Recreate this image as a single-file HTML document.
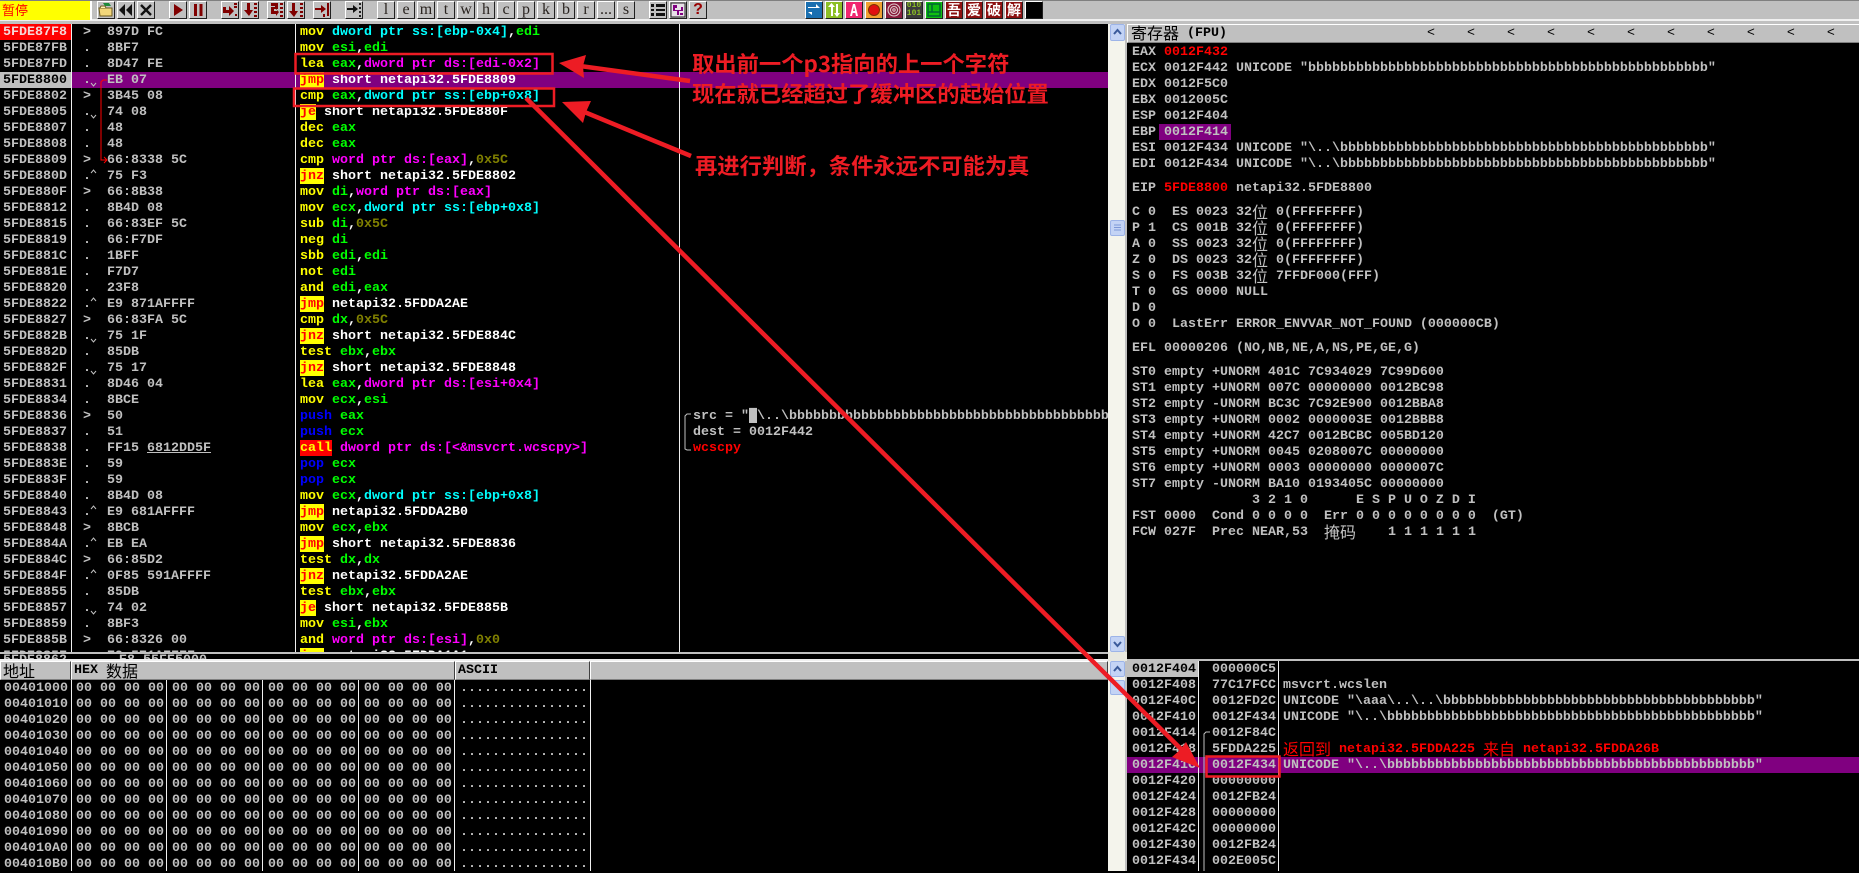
<!DOCTYPE html>
<html><head><meta charset="utf-8"><style>
html,body{margin:0;padding:0;background:#000;width:1859px;height:871px;overflow:hidden}
*{box-sizing:border-box}
pre{margin:1px 0 0 0;position:absolute;font:bold 13.333px/16px "Liberation Mono","Noto Sans CJK SC",monospace;color:#c0c0c0;white-space:pre}
.a{position:absolute}
i{font-style:normal}
.cj{font:normal 16px/16px "Noto Sans CJK SC","WenQuanYi Zen Hei",sans-serif;display:inline-block;height:16px;vertical-align:top;overflow:visible;position:relative;top:-2px}
.hd .cj{top:0}
.y{color:#ff0}.g{color:#0f0}.c{color:#0ff}.m{color:#f0f}.o{color:#808000}.b{color:#00f}.r{color:#f00}
.J{background:#ff0;color:#f00;display:inline-block;height:16px;vertical-align:top;margin-top:-1px;padding-top:1px}
.C{background:#f00;color:#ff0;display:inline-block;height:16px;vertical-align:top;margin-top:-1px;padding-top:1px}
.btn{position:absolute;top:1px;width:18px;height:18px;background:#c0c0c0;border:1px solid;border-color:#fff #202020 #202020 #fff;overflow:hidden;text-align:center;font:16px/16px "Liberation Serif",serif;color:#2a2420}
.btn svg{display:block;position:absolute;left:0;top:0}
.ic{position:absolute;top:1px;width:18px;height:18px;border:1px solid;border-color:#fff #202020 #202020 #fff;overflow:hidden}
.ic svg{display:block}
.hd{position:absolute;background:#c0c0c0;height:19px;border:1px solid;border-color:#fff #404040 #808080 #fff;font:bold 13.333px/17px "Liberation Mono","Noto Sans CJK SC",monospace;color:#000;white-space:pre;padding-left:2px}
.l{position:absolute;background:#f0f0f0;width:1px}
.sb{position:absolute;left:1110px;width:15px;background:#c3d3f5;border:1px solid #9db4e8;border-radius:2px}
.note{position:absolute;font:bold 22.3px/26px "Noto Sans CJK SC","WenQuanYi Zen Hei",sans-serif;color:#ed1c24;white-space:pre}
</style></head><body>

<!-- toolbar -->
<div class="a" style="left:0;top:0;width:1859px;height:24px;background:#c0c0c0;border-top:1px solid #808080"></div>
<div class="a" style="left:0;top:19px;width:1859px;height:2px;background:#f0f0f0"></div>
<div class="a" style="left:0;top:1px;width:90px;height:19px;background:#ff0;color:#f00;font:13px/18px 'Noto Sans CJK SC',sans-serif;padding-left:2px">暂停</div>
<div class="a" style="left:90px;top:1px;width:2px;height:19px;background:#fff"></div>

<div class="btn" style="left:97px"><svg width="16" height="16"><path d="M1 6h13v8H2z" fill="#f2d77a" stroke="#6b5a20"/><path d="M2 6l1-2h4l1 2" fill="#fff3b0" stroke="#6b5a20"/><path d="M5 1h6l2 3H7z" fill="#1c8a3a"/></svg></div>
<div class="btn" style="left:117px"><svg width="16" height="16"><path d="M7 2v12L1 8zM14 2v12L8 8z" fill="#111"/></svg></div>
<div class="btn" style="left:137px"><svg width="16" height="16"><path d="M3 3l10 10M13 3L3 13" stroke="#111" stroke-width="2.4"/></svg></div>
<div class="btn" style="left:169px"><svg width="16" height="16"><path d="M4 2l9 6-9 6z" fill="#800000"/></svg></div>
<div class="btn" style="left:189px"><svg width="16" height="16"><path d="M4 2h3v12H4zM9.500 2h3v12h-3z" fill="#800000"/></svg></div>
<div class="btn" style="left:221px"><svg width="16" height="16"><path d="M1 5h3v3h3V4l5 5-5 5v-3H1z M12 1h3v2h-3zM12 4h3v2h-3zM13 12h2v2h-2z" fill="#800000"/></svg></div>
<div class="btn" style="left:241px"><svg width="16" height="16"><path d="M5 1h3v7h3l-4 6-5-6h3z M12 1h3v2h-3zM12 5h3v2h-3zM12 9h3v2h-3zM12 13h3v2h-3z" fill="#800000"/></svg></div>
<div class="btn" style="left:267px"><svg width="16" height="16"><path d="M3 1h7v6H6v2h3V7l-1 0 3 3-3 4v-2H3V5h4V4H3z M12 1h3v2h-3zM12 5h3v2h-3zM12 9h3v2h-3zM12 13h3v2h-3z" fill="#800000"/></svg></div>
<div class="btn" style="left:287px"><svg width="16" height="16"><path d="M4 1h3v8h3l-4 6-5-6h3z M12 1h3v2h-3zM12 5h3v2h-3zM12 9h3v2h-3zM12 13h3v2h-3z" fill="#800000"/></svg></div>
<div class="btn" style="left:313px"><svg width="16" height="16"><path d="M1 6h6V3l5 4-5 4V8H1zM13 1h2v13h-2zM9 12h2v3H9z" fill="#800000"/></svg></div>
<div class="btn" style="left:345px"><svg width="16" height="16"><path d="M1 6h6V3l5 4-5 4V8H1z" fill="#111"/><path d="M13 1h2v2h-2zM13 5h2v2h-2zM13 9h2v2h-2zM13 13h2v2h-2z" fill="#222"/></svg></div>
<div class="btn" style="left:377px">l</div><div class="btn" style="left:397px">e</div><div class="btn" style="left:417px">m</div><div class="btn" style="left:437px">t</div><div class="btn" style="left:457px">w</div><div class="btn" style="left:477px">h</div><div class="btn" style="left:497px">c</div><div class="btn" style="left:517px">p</div><div class="btn" style="left:537px">k</div><div class="btn" style="left:557px">b</div><div class="btn" style="left:577px">r</div><div class="btn" style="left:597px">...</div><div class="btn" style="left:617px">s</div>
<div class="btn" style="left:649px"><svg width="16" height="16"><path d="M1 2h3v3H1zM6 2h9v3H6zM1 7h3v2H1zM6 7h9v2H6zM1 11h3v3H1zM6 11h9v3H6z" fill="#111"/></svg></div>
<div class="btn" style="left:669px"><svg width="16" height="16"><rect x="1" y="1" width="14" height="14" fill="#e8e0e8" stroke="#222"/><path d="M3 3h4v3H5v2h6V5h2v4H9v4H7V9H3zM10 11h3v2h-3z" fill="#800080"/></svg></div>
<div class="btn" style="left:689px;color:#900;font:bold 16px/16px 'Liberation Sans',sans-serif">?</div>

<div class="ic" style="left:805px;background:#1a6fb0"><svg width="16" height="16"><path d="M2 5h8V2l4 4-4 0H2zM14 10H6v3L2 10l4 0h8z" fill="#fff"/></svg></div>
<div class="ic" style="left:825px;background:#8cbf26"><svg width="16" height="16"><path d="M5 14V5H2l3.500-4L9 5H7v9zM10 2h2v9h2l-3 4-3-4h2z" fill="#fff"/></svg></div>
<div class="ic" style="left:845px;background:#f0266f"><svg width="16" height="16"><path d="M4 14L7 2h2l3 12h-2l-.7-3H6.700L6 14zM7 9h2L8 5z" fill="#fff"/></svg></div>
<div class="ic" style="left:865px;background:#f0a030"><svg width="16" height="16"><circle cx="8" cy="8" r="5.500" fill="#e01010" stroke="#803000"/></svg></div>
<div class="ic" style="left:885px;background:#8a1c3c"><svg width="16" height="16" fill="none" stroke="#e0d0d0"><circle cx="8" cy="8" r="6"/><circle cx="8" cy="8" r="3.500"/><circle cx="8" cy="8" r="1.200"/></svg></div>
<div class="ic" style="left:905px;background:#3c3c3c;color:#8cbf26;font:bold 8px/8px 'Liberation Mono',monospace;text-align:center">010<br>101</div>
<div class="ic" style="left:925px;background:#10c010"><svg width="16" height="16" fill="none" stroke="#063"><rect x="2" y="2" width="12" height="12" stroke-width="1.500"/><path d="M6 2v8M2 10h12" stroke-width="1.500"/></svg></div>
<div class="ic" style="left:945px;background:#8b0f0f;color:#fff;font:bold 14px/16px 'Noto Sans CJK SC',sans-serif;text-align:center">吾</div>
<div class="ic" style="left:965px;background:#8b0f0f;color:#fff;font:bold 14px/16px 'Noto Sans CJK SC',sans-serif;text-align:center">爱</div>
<div class="ic" style="left:985px;background:#8b0f0f;color:#fff;font:bold 14px/16px 'Noto Sans CJK SC',sans-serif;text-align:center">破</div>
<div class="ic" style="left:1005px;background:#8b0f0f;color:#fff;font:bold 14px/16px 'Noto Sans CJK SC',sans-serif;text-align:center">解</div>
<div class="ic" style="left:1025px;background:#000"></div>

<!-- CPU pane -->
<div class="a" style="left:0;top:24px;width:1108px;height:628px;overflow:hidden;background:#000">
<div class="a" style="left:71px;top:48px;width:1037px;height:16px;background:#800080"></div>
<div class="a" style="left:0;top:0;width:71px;height:16px;background:#f00"></div>
<div class="a" style="left:0;top:48px;width:71px;height:16px;background:#c0c0c0"></div>
<pre style="left:3px;top:0"><i style="color:#f4d8d8">5FDE87F8</i>
5FDE87FB
5FDE87FD
<i style="color:#000">5FDE8800</i>
5FDE8802
5FDE8805
5FDE8807
5FDE8808
5FDE8809
5FDE880D
5FDE880F
5FDE8812
5FDE8815
5FDE8819
5FDE881C
5FDE881E
5FDE8820
5FDE8822
5FDE8827
5FDE882B
5FDE882D
5FDE882F
5FDE8831
5FDE8834
5FDE8836
5FDE8837
5FDE8838
5FDE883E
5FDE883F
5FDE8840
5FDE8843
5FDE8848
5FDE884A
5FDE884C
5FDE884F
5FDE8855
5FDE8857
5FDE8859
5FDE885B
5FDE885F</pre>
<pre style="left:83px;top:0">&gt;
.
.
.
&gt;
.
.
.
&gt;
.
&gt;
.
.
.
.
.
.
.
&gt;
.
.
.
.
.
&gt;
.
.
.
.
.
.
&gt;
.
&gt;
.
.
.
.
&gt;
.</pre>
<pre style="left:107px;top:0">897D FC
8BF7
8D47 FE
EB 07
3B45 08
74 08
48
48
66:8338 5C
75 F3
66:8B38
8B4D 08
66:83EF 5C
66:F7DF
1BFF
F7D7
23F8
E9 871AFFFF
66:83FA 5C
75 1F
85DB
75 17
8D46 04
8BCE
50
51
FF15 <i style="text-decoration:underline">6812DD5F</i>
59
59
8B4D 08
E9 681AFFFF
8BCB
EB EA
66:85D2
0F85 591AFFFF
85DB
74 02
8BF3
66:8326 00
E9 571AFFFF</pre>
<pre style="left:300px;top:0;color:#fff"><i class="y">mov</i> <i class="c">dword ptr ss:[ebp-0x4]</i>,<i class="g">edi</i>
<i class="y">mov</i> <i class="g">esi</i>,<i class="g">edi</i>
<i class="y">lea</i> <i class="g">eax</i>,<i class="m">dword ptr ds:[edi-0x2]</i>
<i class="J">jmp</i> short netapi32.5FDE8809
<i class="y">cmp</i> <i class="g">eax</i>,<i class="c">dword ptr ss:[ebp+0x8]</i>
<i class="J">je</i> short netapi32.5FDE880F
<i class="y">dec</i> <i class="g">eax</i>
<i class="y">dec</i> <i class="g">eax</i>
<i class="y">cmp</i> <i class="m">word ptr ds:[eax]</i>,<i class="o">0x5C</i>
<i class="J">jnz</i> short netapi32.5FDE8802
<i class="y">mov</i> <i class="g">di</i>,<i class="m">word ptr ds:[eax]</i>
<i class="y">mov</i> <i class="g">ecx</i>,<i class="c">dword ptr ss:[ebp+0x8]</i>
<i class="y">sub</i> <i class="g">di</i>,<i class="o">0x5C</i>
<i class="y">neg</i> <i class="g">di</i>
<i class="y">sbb</i> <i class="g">edi</i>,<i class="g">edi</i>
<i class="y">not</i> <i class="g">edi</i>
<i class="y">and</i> <i class="g">edi</i>,<i class="g">eax</i>
<i class="J">jmp</i> netapi32.5FDDA2AE
<i class="y">cmp</i> <i class="g">dx</i>,<i class="o">0x5C</i>
<i class="J">jnz</i> short netapi32.5FDE884C
<i class="y">test</i> <i class="g">ebx</i>,<i class="g">ebx</i>
<i class="J">jnz</i> short netapi32.5FDE8848
<i class="y">lea</i> <i class="g">eax</i>,<i class="m">dword ptr ds:[esi+0x4]</i>
<i class="y">mov</i> <i class="g">ecx</i>,<i class="g">esi</i>
<i class="b">push</i> <i class="g">eax</i>
<i class="b">push</i> <i class="g">ecx</i>
<i class="C">call</i> <i class="m">dword ptr ds:[&lt;&amp;msvcrt.wcscpy&gt;]</i>
<i class="b">pop</i> <i class="g">ecx</i>
<i class="b">pop</i> <i class="g">ecx</i>
<i class="y">mov</i> <i class="g">ecx</i>,<i class="c">dword ptr ss:[ebp+0x8]</i>
<i class="J">jmp</i> netapi32.5FDDA2B0
<i class="y">mov</i> <i class="g">ecx</i>,<i class="g">ebx</i>
<i class="J">jmp</i> short netapi32.5FDE8836
<i class="y">test</i> <i class="g">dx</i>,<i class="g">dx</i>
<i class="J">jnz</i> netapi32.5FDDA2AE
<i class="y">test</i> <i class="g">ebx</i>,<i class="g">ebx</i>
<i class="J">je</i> short netapi32.5FDE885B
<i class="y">mov</i> <i class="g">esi</i>,<i class="g">ebx</i>
<i class="y">and</i> <i class="m">word ptr ds:[esi]</i>,<i class="o">0x0</i>
<i class="J">jmp</i> netapi32.5FDDA1A1</pre>
<pre style="left:693px;top:384px">src = "█\..\bbbbbbbbbbbbbbbbbbbbbbbbbbbbbbbbbbbbbbbbbbbbbbbbbbbbbbbbbb
dest = 0012F442
<i class="r">wcscpy</i></pre>
<div class="l" style="left:71px;top:0;height:628px"></div>
<div class="l" style="left:295px;top:0;height:628px"></div>
<div class="l" style="left:679px;top:0;height:628px"></div>
</div>
<div class="a" style="left:0;top:652px;width:1108px;height:2px;background:#c0c0c0"></div>
<div class="a" style="left:0;top:654px;width:1108px;height:5px;overflow:hidden;background:#000">
<pre style="left:3px;top:-2px">5FDE8862</pre>
<pre style="left:119px;top:-2px">E8 55FE5000</pre>
</div>
<div class="a" style="left:0;top:659px;width:1108px;height:2px;background:#f0f0f0"></div>

<!-- scrollbars -->
<div class="a" style="left:1108px;top:24px;width:19px;height:847px;background:#f4f4ec"></div>
<div class="a" style="left:1125px;top:24px;width:2px;height:847px;background:#c0c0c0"></div>
<div class="sb" style="top:24px;height:17px"><svg width="13" height="15"><path d="M3 9l3.500-4L10 9" fill="none" stroke="#3a5a9a" stroke-width="2"/></svg></div>
<div class="sb" style="top:220px;height:16px"><svg width="13" height="14"><path d="M3 4h7M3 6.500h7M3 9h7" stroke="#7d98d8"/></svg></div>
<div class="sb" style="top:636px;height:16px"><svg width="13" height="14"><path d="M3 5l3.500 4L10 5" fill="none" stroke="#3a5a9a" stroke-width="2"/></svg></div>
<div class="a" style="left:1108px;top:652px;width:19px;height:9px;background:#e8e8e0"></div>
<div class="sb" style="top:661px;height:16px"><svg width="13" height="14"><path d="M3 9l3.500-4L10 9" fill="none" stroke="#3a5a9a" stroke-width="2"/></svg></div>
<div class="sb" style="top:680px;height:15px"></div>

<!-- hex dump -->
<div class="hd" style="left:0;top:661px;width:71px"><span class="cj" style="font-size:16px">地址</span></div>
<div class="hd" style="left:71px;top:661px;width:384px">HEX <span class="cj">数据</span></div>
<div class="hd" style="left:455px;top:661px;width:135px">ASCII</div>
<div class="hd" style="left:590px;top:661px;width:518px"></div>
<pre style="left:4px;top:680px">00401000
00401010
00401020
00401030
00401040
00401050
00401060
00401070
00401080
00401090
004010A0
004010B0</pre>
<pre style="left:76px;top:680px">00 00 00 00 00 00 00 00 00 00 00 00 00 00 00 00
00 00 00 00 00 00 00 00 00 00 00 00 00 00 00 00
00 00 00 00 00 00 00 00 00 00 00 00 00 00 00 00
00 00 00 00 00 00 00 00 00 00 00 00 00 00 00 00
00 00 00 00 00 00 00 00 00 00 00 00 00 00 00 00
00 00 00 00 00 00 00 00 00 00 00 00 00 00 00 00
00 00 00 00 00 00 00 00 00 00 00 00 00 00 00 00
00 00 00 00 00 00 00 00 00 00 00 00 00 00 00 00
00 00 00 00 00 00 00 00 00 00 00 00 00 00 00 00
00 00 00 00 00 00 00 00 00 00 00 00 00 00 00 00
00 00 00 00 00 00 00 00 00 00 00 00 00 00 00 00
00 00 00 00 00 00 00 00 00 00 00 00 00 00 00 00</pre>
<pre style="left:460px;top:680px">................
................
................
................
................
................
................
................
................
................
................
................</pre>
<div class="l" style="left:71px;top:680px;height:191px"></div>
<div class="l" style="left:166px;top:680px;height:191px"></div>
<div class="l" style="left:262px;top:680px;height:191px"></div>
<div class="l" style="left:358px;top:680px;height:191px"></div>
<div class="l" style="left:454px;top:680px;height:191px"></div>
<div class="l" style="left:590px;top:680px;height:191px"></div>

<!-- registers -->
<div class="a" style="left:1127px;top:24px;width:732px;height:19px;background:#c0c0c0;border-top:1px solid #fff;border-left:1px solid #fff;border-bottom:1px solid #808080"></div>
<pre style="left:1131px;top:25px;color:#000"><span class="cj">寄存器</span> (FPU)</pre>
<pre style="left:1427px;top:25px;color:#000;font-weight:normal">&lt;    &lt;    &lt;    &lt;    &lt;    &lt;    &lt;    &lt;    &lt;    &lt;    &lt;</pre>
<div class="a" style="left:1159px;top:124px;width:72px;height:16px;background:#800080"></div>
<pre style="left:1132px;top:44px">EAX <i class="r">0012F432</i>
ECX 0012F442 UNICODE "bbbbbbbbbbbbbbbbbbbbbbbbbbbbbbbbbbbbbbbbbbbbbbbbbb"
EDX 0012F5C0
EBX 0012005C
ESP 0012F404
EBP 0012F414
ESI 0012F434 UNICODE "\..\bbbbbbbbbbbbbbbbbbbbbbbbbbbbbbbbbbbbbbbbbbbbbb"
EDI 0012F434 UNICODE "\..\bbbbbbbbbbbbbbbbbbbbbbbbbbbbbbbbbbbbbbbbbbbbbb"</pre>
<pre style="left:1132px;top:180px">EIP <i class="r">5FDE8800</i> netapi32.5FDE8800</pre>
<pre style="left:1132px;top:204px">C 0  ES 0023 32<span class="cj">位</span> 0(FFFFFFFF)
P 1  CS 001B 32<span class="cj">位</span> 0(FFFFFFFF)
A 0  SS 0023 32<span class="cj">位</span> 0(FFFFFFFF)
Z 0  DS 0023 32<span class="cj">位</span> 0(FFFFFFFF)
S 0  FS 003B 32<span class="cj">位</span> 7FFDF000(FFF)
T 0  GS 0000 NULL
D 0
O 0  LastErr ERROR_ENVVAR_NOT_FOUND (000000CB)</pre>
<pre style="left:1132px;top:340px">EFL 00000206 (NO,NB,NE,A,NS,PE,GE,G)</pre>
<pre style="left:1132px;top:364px">ST0 empty +UNORM 401C 7C934029 7C99D600
ST1 empty +UNORM 007C 00000000 0012BC98
ST2 empty -UNORM BC3C 7C92E900 0012BBA8
ST3 empty +UNORM 0002 0000003E 0012BBB8
ST4 empty +UNORM 42C7 0012BCBC 005BD120
ST5 empty +UNORM 0045 0208007C 00000000
ST6 empty +UNORM 0003 00000000 0000007C
ST7 empty -UNORM BA10 0193405C 00000000
               3 2 1 0      E S P U O Z D I
FST 0000  Cond 0 0 0 0  Err 0 0 0 0 0 0 0 0  (GT)
FCW 027F  Prec NEAR,53  <span class="cj">掩码</span>    1 1 1 1 1 1</pre>

<!-- stack -->
<div class="a" style="left:1127px;top:659px;width:732px;height:2px;background:#c0c0c0"></div>
<div class="a" style="left:1127px;top:757px;width:732px;height:16px;background:#800080"></div>
<div class="a" style="left:1127px;top:661px;width:71px;height:16px;background:#c0c0c0"></div>
<pre style="left:1132px;top:661px"><i style="color:#000">0012F404</i>
0012F408
0012F40C
0012F410
0012F414
0012F418
0012F41C
0012F420
0012F424
0012F428
0012F42C
0012F430
0012F434</pre>
<pre style="left:1212px;top:661px">000000C5
77C17FCC
0012FD2C
0012F434
0012F84C
5FDDA225
0012F434
00000000
0012FB24
00000000
00000000
0012FB24
002E005C</pre>
<pre style="left:1283px;top:677px">msvcrt.wcslen
UNICODE "\aaa\..\..\bbbbbbbbbbbbbbbbbbbbbbbbbbbbbbbbbbbbbbb"
UNICODE "\..\bbbbbbbbbbbbbbbbbbbbbbbbbbbbbbbbbbbbbbbbbbbbbb"
 
<i class="r"><span class="cj">返回到</span> netapi32.5FDDA225 <span class="cj">来自</span> netapi32.5FDDA26B</i>
UNICODE "\..\bbbbbbbbbbbbbbbbbbbbbbbbbbbbbbbbbbbbbbbbbbbbbb"</pre>
<div class="l" style="left:1198px;top:661px;height:210px"></div>
<div class="l" style="left:1278px;top:661px;height:210px"></div>

<!-- annotations -->
<div class="note" style="left:692px;top:50px">取出前一个p3指向的上一个字符</div>
<div class="note" style="left:692px;top:80px">现在就已经超过了缓冲区的起始位置</div>
<div class="note" style="left:695px;top:152px">再进行判断，条件永远不可能为真</div>

<svg class="a" style="left:0;top:0" width="1859" height="871" viewBox="0 0 1859 871">
<!-- gutter jump -->
<path d="M107 80h-4l-2 2v78h6M104 157l3 3-3 3" fill="none" stroke="#f00"/>
<g fill="none" stroke="#c0c0c0">
<path d="M91 83l2.500 3 2.500-3M91 115l2.500 3 2.500-3M91 339l2.500 3 2.500-3M91 371l2.500 3 2.500-3M91 611l2.500 3 2.500-3"/>
<path d="M91 173l2.500-3 2.500 3M91 301l2.500-3 2.500 3M91 509l2.500-3 2.500 3M91 541l2.500-3 2.500 3M91 573l2.500-3 2.500 3"/>
<path d="M691 414h-4l-2 2v33l2 1h4"/>
<path d="M1210 732h-4l-2 2v137"/>
</g>
<!-- red boxes -->
<g fill="none" stroke="#ed1c24" stroke-width="2.500">
<rect x="295.500" y="54" width="257" height="19.500"/>
<rect x="294" y="88.500" width="260" height="17.500"/>
<rect x="1206.500" y="756.500" width="73" height="20"/>
</g>
<!-- arrows -->
<g stroke="#ed1c24" fill="#ed1c24">
<path d="M690 81L580 66" stroke-width="4.500" fill="none"/>
<path d="M559 63l27-8-3 11 1 12z" stroke="none"/>
<path d="M691 156L582 111" stroke-width="4.500" fill="none"/>
<path d="M562 102l29-1-5 11-3 11z" stroke="none"/>
<path d="M526 98L1185 753" stroke-width="4.500" fill="none"/>
<path d="M1200 768l-28-11 8-7 6-8z" stroke="none"/>
</g>
</svg>
</body></html>
